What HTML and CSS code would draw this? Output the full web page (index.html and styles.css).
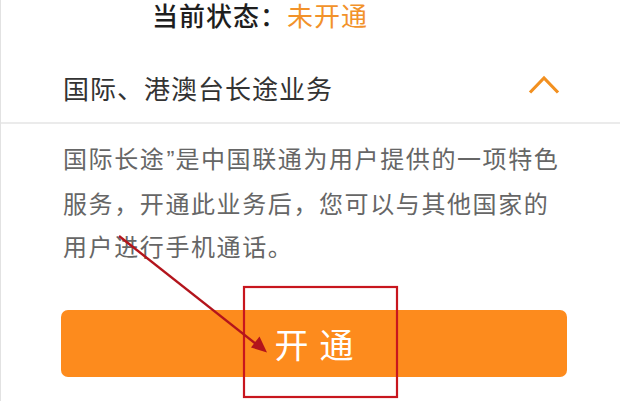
FILE: index.html
```html
<!DOCTYPE html>
<html lang="zh-CN">
<head>
<meta charset="utf-8">
<title>国际、港澳台长途业务</title>
<link rel="stylesheet" href="styles.css">
</head>
<body>
<div class="page">
  <div class="status">当前状态：<span class="status-val">未开通</span></div>
  <div class="title-row">
    <span class="title">国际、港澳台长途业务</span>
    <svg class="chevron" width="32" height="20" viewBox="0 0 32 20"><polyline points="2,17.5 16,3 30,17.5" fill="none" stroke="#f29020" stroke-width="3.2"/></svg>
  </div>
  <p class="desc">国际长途<span class="q">”</span>是中国联通为用户提供的一项特色服务，开通此业务后，您可以与其他国家的用户进行手机通话。</p>
  <div class="btn-wrap"><div class="btn"><span>开</span><span>通</span></div></div>
  <svg class="annot" width="620" height="401" viewBox="0 0 620 401">
    <rect x="244" y="287" width="153" height="110" fill="none" stroke="#c8161e" stroke-width="2.2"/>
    <line x1="119" y1="236" x2="258" y2="345.5" stroke="#b3141c" stroke-width="2.4"/>
    <polygon points="267,352.5 251,347.5 259.5,336.5" fill="#b3141c"/>
  </svg>
</div>
</body>
</html>
```

FILE: styles.css
```css
html, body {
  margin: 0;
  padding: 0;
  background: #fff;
}
.page {
  position: relative;
  width: 620px;
  height: 401px;
  overflow: hidden;
  box-sizing: border-box;
  border-left: 1px solid #e2e2e2;
  font-family: "Noto Sans CJK SC", "Noto Sans", sans-serif;
}
.status {
  height: 32px;
  line-height: 30px;
  padding-left: 151px;
  font-size: 26px;
  letter-spacing: 1px;
  color: #1e1e1e;
  font-weight: 500;
  margin-bottom: 20px;
}
.status-val {
  color: #f2922a;
  font-weight: 400;
}
.title-row {
  height: 70px;
  display: flex;
  align-items: center;
  justify-content: space-between;
  padding: 0 60px 0 62px;
  border-bottom: 2px solid #ebebeb;
}
.title {
  font-size: 26px;
  letter-spacing: 1px;
  color: #333;
}
.chevron {
  display: block;
  margin-top: -4px;
}
.desc {
  margin: 0;
  padding: 12px 0 0 62px;
  width: 505px;
  font-size: 24px;
  letter-spacing: 1.6px;
  line-height: 43px;
  color: #666;
}
.q {
  font-family: "Liberation Sans", sans-serif;
  letter-spacing: 0;
  margin: 0 1px;
}
.btn-wrap {
  padding: 43px 0 0 60px;
}
.btn {
  width: 506px;
  height: 67px;
  border-radius: 7px;
  background: #fd8b1d;
  color: #fff;
  font-size: 34px;
  display: flex;
  align-items: center;
  justify-content: center;
  gap: 11px;
}
.annot {
  position: absolute;
  left: -1px;
  top: 0;
  pointer-events: none;
}
```
